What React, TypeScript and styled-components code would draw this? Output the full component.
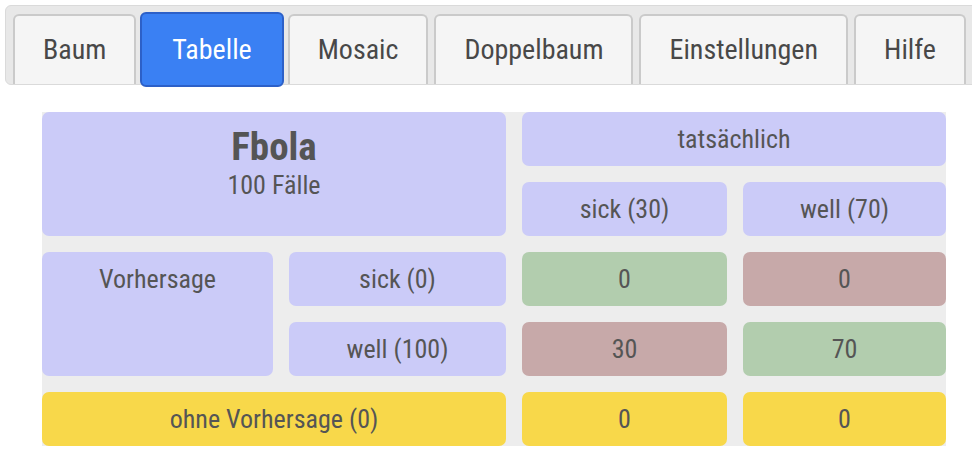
import React from "react";
import styled, { createGlobalStyle, css } from "styled-components";

const Global = createGlobalStyle`
  html, body { margin: 0; padding: 0; background: #ffffff; }
  body { font-family: "Roboto Condensed", Roboto, "Liberation Sans", sans-serif; font-stretch: condensed; color: #555555; }
  * { box-sizing: border-box; }
`;

const Page = styled.div`
  width: 972px;
  height: 476px;
  overflow: hidden;
  padding: 5px 0 0 5px;
`;

const TabBar = styled.div`
  display: flex;
  gap: 6px;
  height: 80px;
  padding: 8px 0 0 7px;
  margin-right: -20px;
  background: #e8e8e8;
  border: 1px solid #dadada;
  border-radius: 6px;
`;

const Tab = styled.div<{ $active?: boolean }>`
  height: 70px;
  padding: 0 28px;
  display: flex;
  align-items: center;
  font-size: 28px;
  line-height: 1;
  color: #484848;
  background: #f5f5f5;
  border: 2px solid #cacaca;
  border-bottom: none;
  border-radius: 6px 6px 0 0;
  white-space: nowrap;
  ${(p) =>
    p.$active &&
    css`
      position: relative;
      z-index: 1;
      height: 75px;
      margin: -2px -2px 0 -2px;
      padding: 0 30px;
      background: #3a80f3;
      color: #ffffff;
      border: 2px solid #2c60c8;
      border-radius: 6px;
    `}
`;

const Grid = styled.div`
  display: grid;
  grid-template-columns: 231px 217px 205px 203px;
  grid-template-rows: repeat(5, 54px);
  gap: 16px;
  width: 904px;
  margin: 27px 0 0 37px;
  background: #ededed;
`;

type Tone = "blue" | "green" | "red" | "yellow";

const tones: Record<Tone, string> = {
  blue: "#cbcbf8",
  green: "#b2cdae",
  red: "#c7a9a9",
  yellow: "#f8d84a",
};

const Cell = styled.div<{ $tone: Tone; $col: string; $row: string }>`
  grid-column: ${(p) => p.$col};
  grid-row: ${(p) => p.$row};
  background: ${(p) => tones[p.$tone]};
  border-radius: 7px;
  text-align: center;
  font-size: 26px;
  line-height: 54px;
  color: #555555;
  white-space: nowrap;
`;

const TitleCell = styled(Cell)`
  padding-top: 12px;
  line-height: normal;
`;

const Title = styled.div`
  font-size: 39px;
  font-weight: 700;
  line-height: normal;
`;

const Sub = styled.div`
  font-size: 26px;
  line-height: normal;
`;

const tabs = ["Baum", "Tabelle", "Mosaic", "Doppelbaum", "Einstellungen", "Hilfe"];

export default function App() {
  return (
    <Page>
      <Global />
      <TabBar>
        {tabs.map((t) => (
          <Tab key={t} $active={t === "Tabelle"}>
            {t}
          </Tab>
        ))}
      </TabBar>
      <Grid>
        <TitleCell $tone="blue" $col="1 / 3" $row="1 / 3">
          <Title>Fbola</Title>
          <Sub>100 Fälle</Sub>
        </TitleCell>
        <Cell $tone="blue" $col="3 / 5" $row="1">tatsächlich</Cell>
        <Cell $tone="blue" $col="3" $row="2">sick (30)</Cell>
        <Cell $tone="blue" $col="4" $row="2">well (70)</Cell>
        <Cell $tone="blue" $col="1" $row="3 / 5">Vorhersage</Cell>
        <Cell $tone="blue" $col="2" $row="3">sick (0)</Cell>
        <Cell $tone="green" $col="3" $row="3">0</Cell>
        <Cell $tone="red" $col="4" $row="3">0</Cell>
        <Cell $tone="blue" $col="2" $row="4">well (100)</Cell>
        <Cell $tone="red" $col="3" $row="4">30</Cell>
        <Cell $tone="green" $col="4" $row="4">70</Cell>
        <Cell $tone="yellow" $col="1 / 3" $row="5">ohne Vorhersage (0)</Cell>
        <Cell $tone="yellow" $col="3" $row="5">0</Cell>
        <Cell $tone="yellow" $col="4" $row="5">0</Cell>
      </Grid>
    </Page>
  );
}
